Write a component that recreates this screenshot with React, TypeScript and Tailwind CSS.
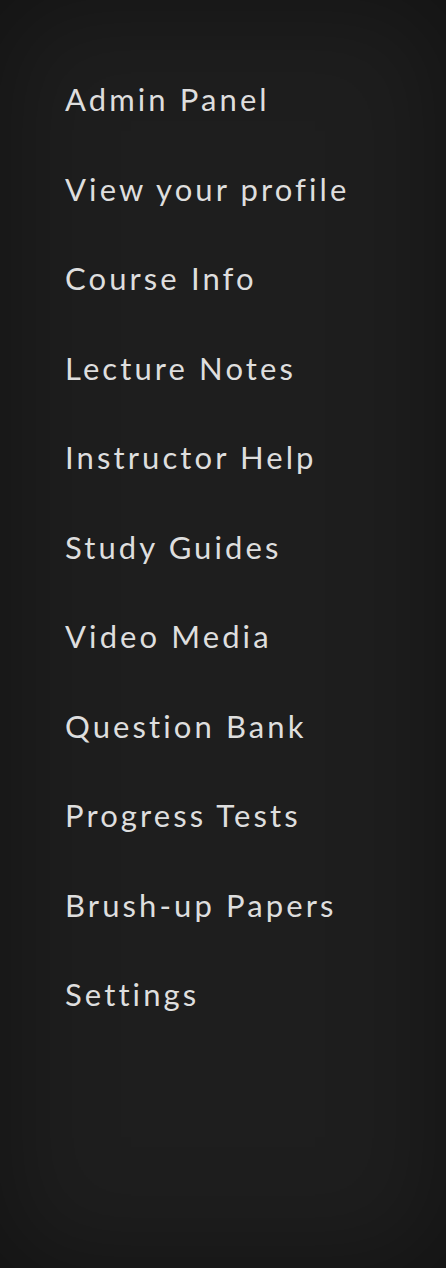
const ITEMS = [
  "Admin Panel",
  "View your profile",
  "Course Info",
  "Lecture Notes",
  "Instructor Help",
  "Study Guides",
  "Video Media",
  "Question Bank",
  "Progress Tests",
  "Brush-up Papers",
  "Settings",
];

export default function App() {
  return (
    <nav className="min-h-[1268px] w-full bg-[#1e1e1e] shadow-[inset_0_0_110px_rgba(0,0,0,0.4)] px-[65px] pt-[77px] font-['Lato',sans-serif]">
      <ul className="flex flex-col">
        {ITEMS.map((label) => (
          <li key={label}>
            <a
              href="#"
              className="block h-[89.5px] text-[31px] leading-[44px] tracking-[3.1px] text-[#dedede]"
            >
              {label}
            </a>
          </li>
        ))}
      </ul>
    </nav>
  );
}
